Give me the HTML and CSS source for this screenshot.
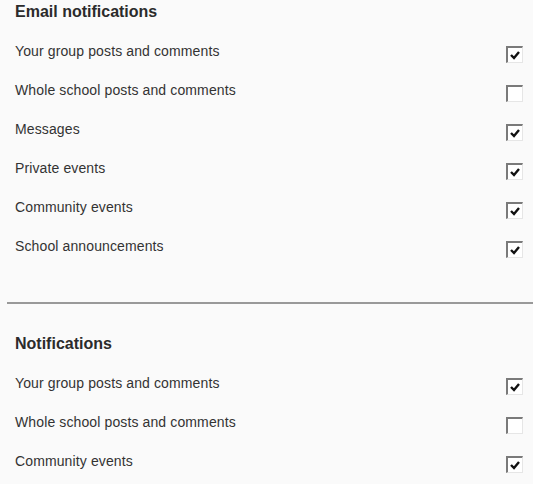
FILE: index.html
```html
<!DOCTYPE html>
<html>
<head>
<meta charset="utf-8">
<link rel="stylesheet" href="styles.css">
</head>
<body>
<div class="page">
  <section class="group">
    <h2 class="title">Email notifications</h2>
    <div class="row"><span class="label">Your group posts and comments</span><span class="box on"><svg viewBox="0 0 14 14"><path d="M3 7 L6 10 L11 4"/></svg></span></div>
    <div class="row"><span class="label">Whole school posts and comments</span><span class="box"></span></div>
    <div class="row"><span class="label">Messages</span><span class="box on"><svg viewBox="0 0 14 14"><path d="M3 7 L6 10 L11 4"/></svg></span></div>
    <div class="row"><span class="label">Private events</span><span class="box on"><svg viewBox="0 0 14 14"><path d="M3 7 L6 10 L11 4"/></svg></span></div>
    <div class="row"><span class="label">Community events</span><span class="box on"><svg viewBox="0 0 14 14"><path d="M3 7 L6 10 L11 4"/></svg></span></div>
    <div class="row"><span class="label">School announcements</span><span class="box on"><svg viewBox="0 0 14 14"><path d="M3 7 L6 10 L11 4"/></svg></span></div>
  </section>
  <hr class="sep">
  <section class="group">
    <h2 class="title">Notifications</h2>
    <div class="row"><span class="label">Your group posts and comments</span><span class="box on"><svg viewBox="0 0 14 14"><path d="M3 7 L6 10 L11 4"/></svg></span></div>
    <div class="row"><span class="label">Whole school posts and comments</span><span class="box"></span></div>
    <div class="row"><span class="label">Community events</span><span class="box on"><svg viewBox="0 0 14 14"><path d="M3 7 L6 10 L11 4"/></svg></span></div>
  </section>
</div>
</body>
</html>
```
FILE: styles.css
```css
html, body {
  margin: 0;
  padding: 0;
  background: #fafafa;
}
body {
  font-family: "Liberation Sans", Arial, sans-serif;
  color: #333;
  overflow: hidden;
}
.page {
  padding-left: 7px;
}
.group {
  padding: 0 10px 0 8px;
}
.title {
  font-size: 16px;
  font-weight: bold;
  line-height: 20px;
  margin: 2px 0 10px;
  color: #2b2b2b;
}
.row {
  display: flex;
  align-items: center;
  justify-content: space-between;
  height: 39px;
  font-size: 14px;
  line-height: 39px;
  letter-spacing: 0.12px;
}
.box {
  box-sizing: border-box;
  width: 17px;
  height: 17px;
  margin-top: 5px;
  border-style: solid;
  border-width: 2px 1px 1px 2px;
  border-color: #7a7a7a #e6e6e6 #e6e6e6 #7a7a7a;
  background: #fff;
  display: flex;
}
.box svg {
  width: 14px;
  height: 14px;
}
.box path {
  fill: none;
  stroke: #111;
  stroke-width: 2.4;
}
.sep {
  margin: 36px 0 30px;
  border: 0;
  height: 2px;
  background: #999;
}
```
